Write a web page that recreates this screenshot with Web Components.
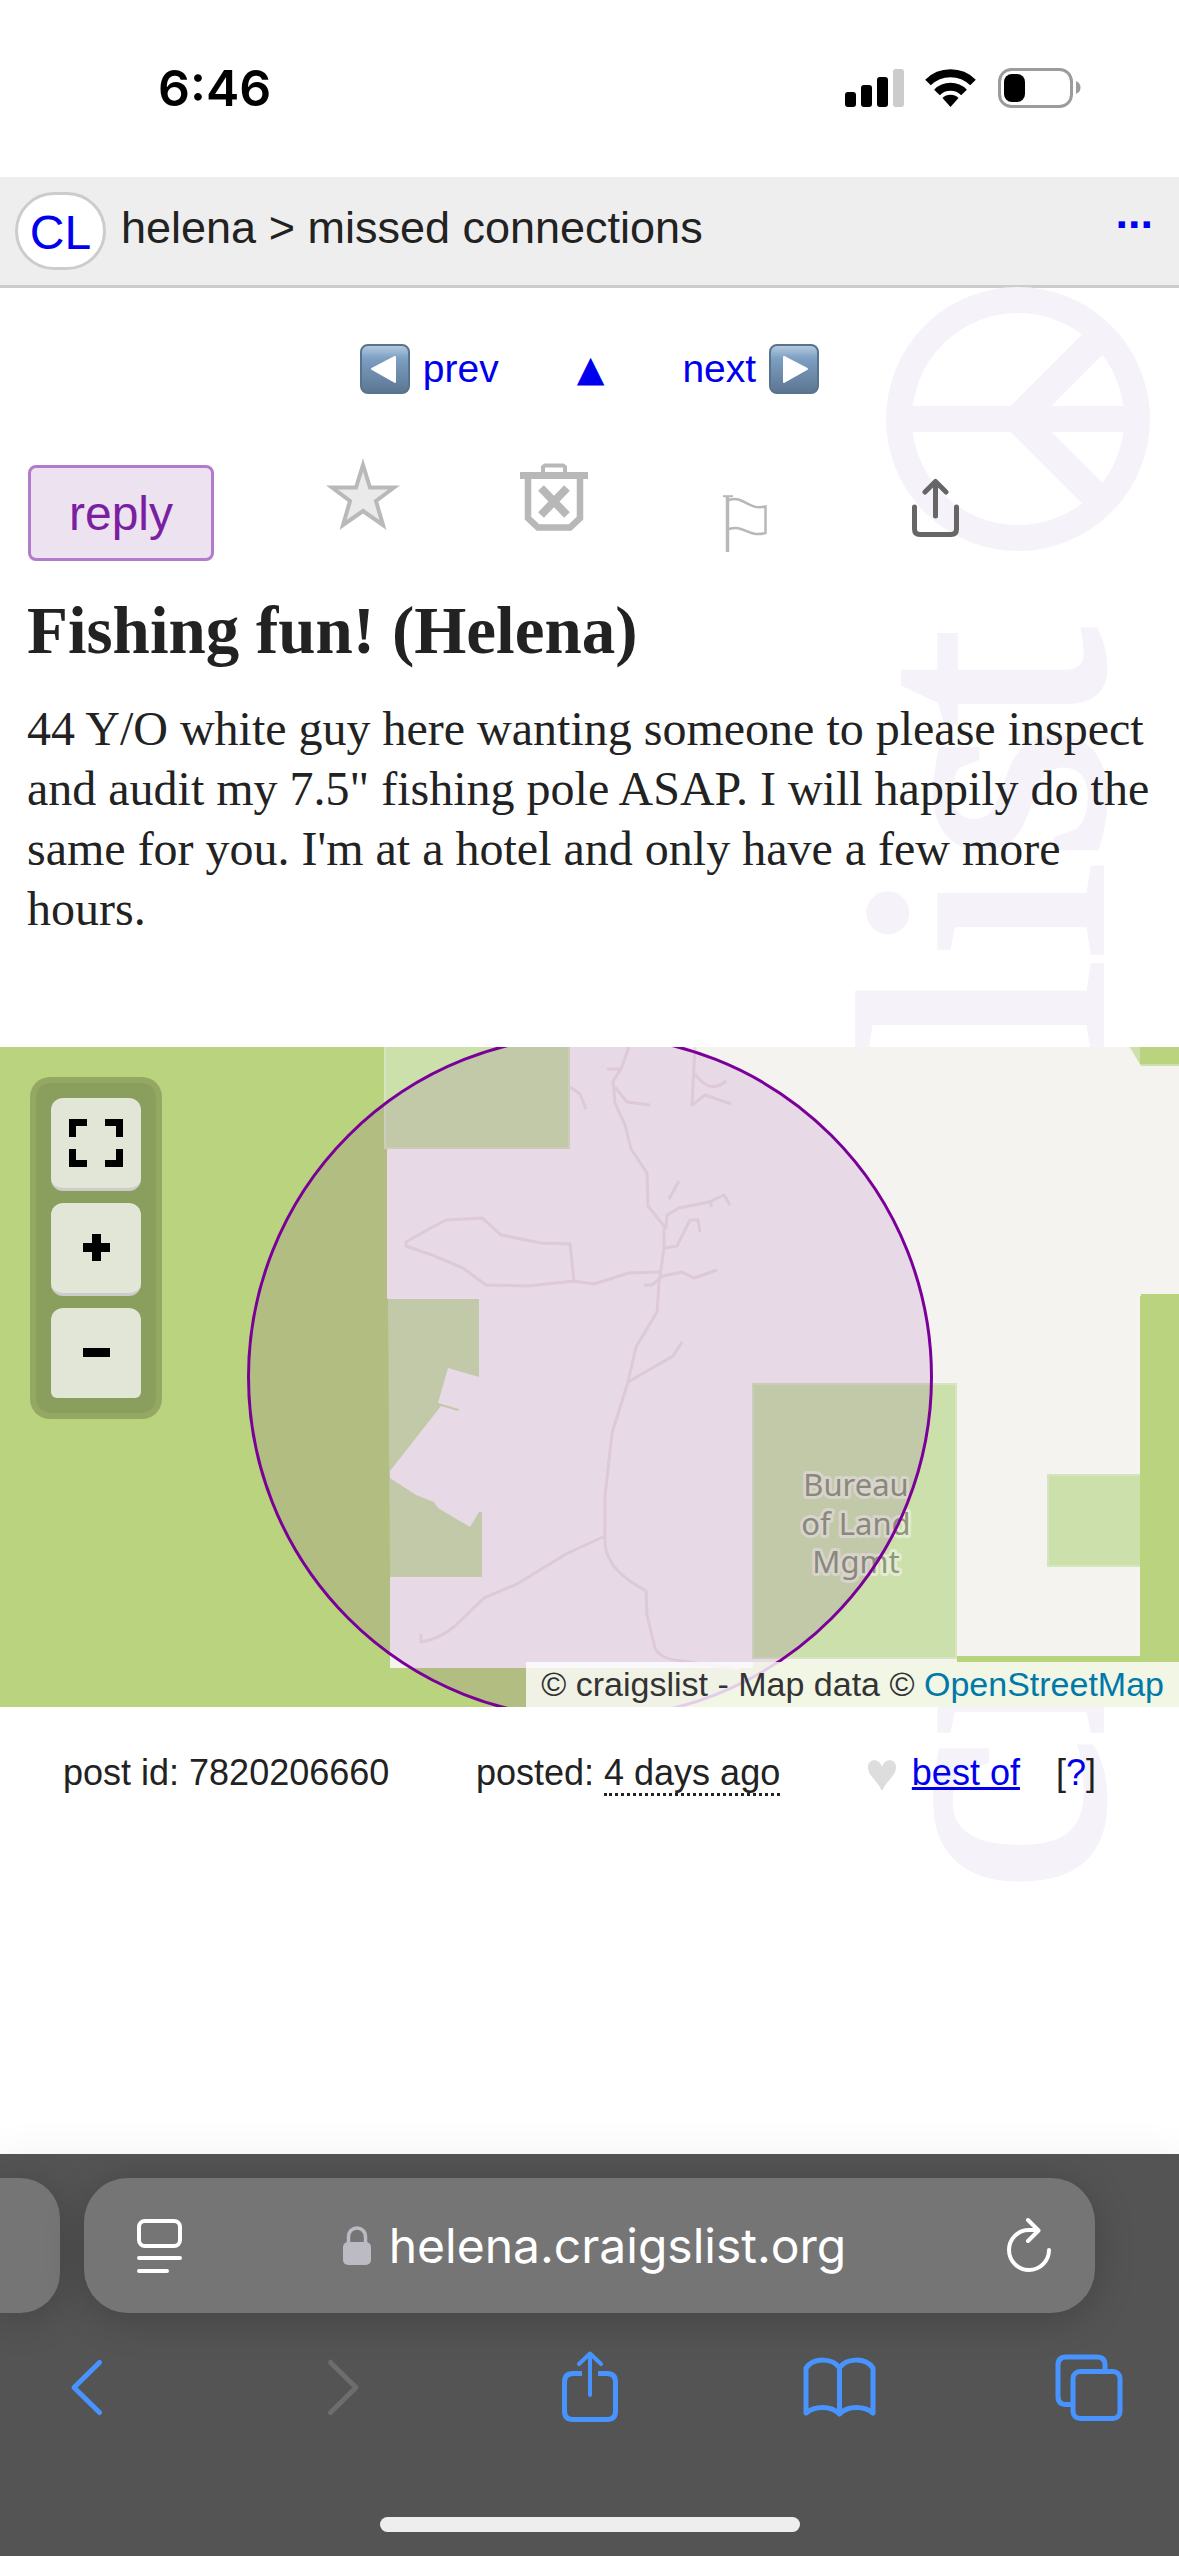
<!DOCTYPE html>
<html lang="en">
<head>
<meta charset="utf-8">
<meta name="viewport" content="width=device-width, initial-scale=1">
<title>Fishing fun! (Helena)</title>
<style>
  :root {
    --sans: "Liberation Sans", Arial, sans-serif;
    --serif: "Liberation Serif", "Times New Roman", serif;
    --system: Inter, sans-serif;
    --link: #0000ee;
    --ink: #222;
  }
  body {
    margin: 0;
    min-height: 100vh;
    display: flex;
    flex-direction: column;
    background: #fff;
    color: var(--ink);
    font-family: var(--sans);
  }
  main {
    position: relative;
    isolation: isolate;
    flex: 1;
  }
</style>
</head>
<body>
  <status-bar>6:46</status-bar>
  <site-header area="helena" category="missed connections"></site-header>
  <main>
    <page-watermark></page-watermark>
    <post-nav></post-nav>
    <post-actions></post-actions>
    <post-body>
      <span slot="title">Fishing fun! (Helena)</span>
      44 Y/O white guy here wanting someone to please inspect and audit my 7.5" fishing pole ASAP. I will happily do the same for you. I'm at a hotel and only have a few more hours.
    </post-body>
    <area-map><map-controls></map-controls></area-map>
    <post-meta post-id="7820206660" posted="4 days ago"></post-meta>
  </main>
  <safari-bar>helena.craigslist.org</safari-bar>

<script>
// small base class, every element below only supplies its markup
class BaseElement extends HTMLElement {
  constructor () {
    super()
    this._shadowRoot = this.attachShadow({ mode: 'open' })
  }

  connectedCallback () {
    this._shadowRoot.innerHTML = `
      <style>
        :host, * { box-sizing: border-box; }
        :host { display: block; }
        svg { display: block; flex: none; }
        a { color: var(--link); text-decoration: none; }
        button {
          display: block;
          margin: 0;
          padding: 0;
          border: 0;
          background: none;
          font: inherit;
          color: inherit;
          cursor: pointer;
        }
      </style>` + this.render()
  }
}

class StatusBar extends BaseElement {
  render () {
    return `
      <style>
        :host {
          display: flex;
          justify-content: space-between;
          align-items: center;
          height: 177px;
          padding: 0 98px 2px 158px;
          color: #000;
          font: 600 50px/60px var(--system);
        }
      </style>
      <time><slot></slot></time>
      <svg width="237" height="40" viewBox="845 68 237 40" role="img" aria-label="Signal, wifi, battery">
        <rect x="846" y="92" width="11" height="15" rx="3"/>
        <rect x="862" y="85" width="11" height="22" rx="3"/>
        <rect x="878" y="77" width="11" height="30" rx="3"/>
        <rect x="894" y="69" width="11" height="38" rx="3" fill="#ccc"/>
        <g fill="none" stroke="#000" stroke-width="8">
          <path d="M929 82.500a32 32 0 0 1 45 0"/>
          <path d="M938 92.500a19 19 0 0 1 27 0"/>
        </g>
        <path d="M943.500 98a11.500 11.500 0 0 1 16 0l-8 9z"/>
        <rect x="1000.500" y="69.500" width="72" height="37" rx="12" fill="none" stroke="#9c9c9c" stroke-width="3"/>
        <rect x="1005" y="74" width="21" height="28" rx="8"/>
        <path d="M1077 81q4.500 2 4.500 6.500t-4.500 6.500z" fill="#9c9c9c"/>
      </svg>`
  }
}
customElements.define('status-bar', StatusBar)

class SiteHeader extends BaseElement {
  render () {
    return `
      <style>
        :host {
          display: flex;
          align-items: center;
          height: 111px;
          padding: 0 26px 0 15px;
          background: #eee;
          border-bottom: 3px solid #ccc;
          font-size: 45px;
          line-height: 60px;
        }
        .logo {
          width: 91px;
          height: 78px;
          margin-right: 15px;
          border: 3px solid #ccc;
          border-radius: 39px;
          background: #fff;
          text-align: center;
          font-size: 48px;
          line-height: 76px;
        }
        nav {
          flex: 1;
          padding-bottom: 6px;
        }
        nav a { color: var(--ink); }
        button {
          padding-bottom: 36px;
          color: var(--link);
          font-weight: bold;
        }
      </style>
      <a class="logo" href="#">CL</a>
      <nav><a href="#">${this.getAttribute('area')}</a> &gt; <a href="#">${this.getAttribute('category')}</a></nav>
      <button>...</button>`
  }
}
customElements.define('site-header', SiteHeader)

class PageWatermark extends BaseElement {
  render () {
    return `
      <style>
        :host {
          position: absolute;
          top: 0;
          right: 0;
          z-index: -1;
          pointer-events: none;
        }
        svg { overflow: visible; }
        text { font-family: var(--serif); }
      </style>
      <svg width="339" height="1640" viewBox="0 0 339 1640" fill="#f5f3f9" stroke="#f5f3f9" aria-hidden="true">
        <circle cx="178" cy="131" r="119" fill="none" stroke-width="26"/>
        <path d="M59 131H297" stroke-width="26"/>
        <path d="M262 47L178 131L262 215" fill="none" stroke-width="29"/>
        <text transform="translate(261 1604) rotate(-90)" font-size="350" stroke-width="6">craigslist</text>
      </svg>`
  }
}
customElements.define('page-watermark', PageWatermark)

class PostNav extends BaseElement {
  arrow (points) {
    return `
      <svg width="50" height="50" viewBox="0 0 50 50" aria-hidden="true">
        <defs>
          <linearGradient id="g" x2="0" y2="1">
            <stop offset="0" stop-color="#b9cde0"/>
            <stop offset=".28" stop-color="#7c9fc2"/>
            <stop offset="1" stop-color="#5c7590"/>
          </linearGradient>
        </defs>
        <rect x="1" y="1" width="48" height="48" rx="7" fill="url(#g)" stroke="#58738e" stroke-width="2"/>
        <polygon points="${points}" fill="#fff" stroke="#fff" stroke-width="2" stroke-linejoin="round"/>
      </svg>`
  }

  render () {
    return `
      <style>
        nav {
          display: flex;
          justify-content: center;
          align-items: center;
          gap: 78px;
          padding-top: 56px;
          font-size: 39px;
          line-height: 50px;
        }
        a {
          display: flex;
          gap: 13px;
        }
        .up { font: 36px/50px "DejaVu Sans", sans-serif; }
      </style>
      <nav>
        <a href="#">${this.arrow('12,25 35,13 35,38')}prev</a>
        <a href="#" class="up">▲</a>
        <a href="#">next${this.arrow('38,25 15,13 15,38')}</a>
      </nav>`
  }
}
customElements.define('post-nav', PostNav)

class PostActions extends BaseElement {
  render () {
    return `
      <style>
        :host {
          display: flex;
          align-items: flex-end;
          padding: 63px 28px 0;
        }
        .reply {
          width: 186px;
          height: 96px;
          margin-right: 54px;
          border: 3px solid #b37bcb;
          border-radius: 8px;
          background: #ede2ef;
          color: #7b1fa2;
          font-size: 48px;
        }
        .icon {
          flex: 0 1 190px;
          display: flex;
          justify-content: center;
        }
      </style>
      <button class="reply">reply</button>
      <button class="icon" aria-label="favorite">
        <svg width="80" height="104" viewBox="323 457 80 104">
          <path d="M363 465L370 487.500H394L376 501L383 525L363 511L343 525L350 501L332 487.500H356Z" fill="#eaeaea" stroke="#b9b9bb" stroke-width="4"/>
        </svg>
      </button>
      <button class="icon" aria-label="hide">
        <svg width="80" height="104" viewBox="513 457 80 104" fill="none" stroke="#b8b8b8">
          <path d="M520 475.500H588" stroke-width="7"/>
          <path d="M543 474V467L545 465.500H563L565 467V474" stroke-width="4"/>
          <path d="M528 478V518L538 527.500H570L580 518V478" stroke-width="6.500"/>
          <path d="M541 488L567 515M567 488L541 515" stroke-width="8"/>
        </svg>
      </button>
      <button class="icon" aria-label="flag">
        <svg width="80" height="104" viewBox="703 457 80 104" fill="none" stroke="#b8b8b8">
          <path d="M727.500 496V552" stroke-width="3.500"/>
          <path d="M723 496.200H733" stroke-width="2"/>
          <path d="M729 500C744 495 748 511 765.500 506.500V533C748 538 744 524 729 529" stroke-width="2.500"/>
        </svg>
      </button>
      <button class="icon" aria-label="share">
        <svg width="80" height="104" viewBox="893 457 80 104" fill="none" stroke="#666" stroke-width="5" stroke-linecap="round" stroke-linejoin="round">
          <path d="M914.500 507V529Q914.500 534.500 920 534.500H951Q956.500 534.500 956.500 529V507"/>
          <path d="M935.500 516V482M925 492L935.500 481.500L946 492"/>
        </svg>
      </button>`
  }
}
customElements.define('post-actions', PostActions)

class PostBody extends BaseElement {
  render () {
    return `
      <style>
        :host {
          padding: 30px 27px 108px;
          font: 48px/60px var(--serif);
        }
        h1 {
          margin: 0 0 30px;
          font-size: 67px;
          line-height: 78px;
        }
        p { margin: 0; }
      </style>
      <h1><slot name="title"></slot></h1>
      <p><slot></slot></p>`
  }
}
customElements.define('post-body', PostBody)

class AreaMap extends BaseElement {
  render () {
    return `
      <style>
        :host {
          position: relative;
          height: 660px;
          overflow: hidden;
        }
        svg {
          width: 100%;
          height: 100%;
        }
        text {
          font: 31px "Noto Sans", sans-serif;
          text-anchor: middle;
          paint-order: stroke;
        }
        ::slotted(map-controls) {
          position: absolute;
          top: 30px;
          left: 30px;
        }
        .credit {
          position: absolute;
          right: 0;
          bottom: 0;
          padding: 0 15px;
          background: rgba(255, 255, 255, 0.8);
          color: #333;
          font-size: 34px;
          line-height: 45px;
        }
        .credit a { color: #0078a8; }
      </style>
      <svg viewBox="0 0 1179 660" preserveAspectRatio="xMidYMid slice" role="img" aria-label="Map">
        <rect width="1179" height="660" fill="#b9d37e"/>
        <path d="M387 0H1130L1141 18H1179V247H1141V609H957V615H753V621H390V252H387Z" fill="#f4f3ef"/>
        <path d="M1130 0H1179V19H1141Z" fill="#cbe0ab"/>
        <rect x="1140" y="0" width="39" height="17" fill="#b9d37e"/>
        <g fill="#cbe0ab" stroke="#d5e5bd" stroke-width="2">
          <rect x="385" y="-2" width="184" height="103"/>
          <path d="M388 252H479V330L448 321L438 356L459 362L458 364L441 359L390 424V431L416 448L434 455L438 461L470 480L479 465H482V530H390Z" stroke="none"/>
          <rect x="753" y="337" width="203" height="274"/>
          <rect x="1048" y="428" width="93" height="91"/>
        </g>
        <rect x="1140" y="249" width="39" height="411" fill="#b9d37e"/>
        <g fill="none" stroke="#e9e0de" stroke-width="3" stroke-linejoin="round">
          <path d="M574 234L570 197L541 196L501 188L490 178L482 171L446 173L427 183L406 195V199L432 208L463 221L486 238L528 239L574 234L594 237L629 226L659 225"/>
          <path d="M644 238H652L663 229L682 225L694 231L717 223"/>
          <path d="M629 0L621 22L613 34L615 56L625 78L631 102L647 126L648 159L664 179V201L659 236L657 265L636 300L628 335L612 386L605 449V498C608 520 625 532 646 544L647 568L655 601Q660 612 682 614L740 622"/>
          <path d="M421 587V595Q440 592 455 579L484 551L517 537L566 507L605 489"/>
          <path d="M628 335L673 309L682 295"/>
          <path d="M666 182L667 168L679 161L709 155L724 148L730 158M711 160V155M669 152L679 134"/>
          <path d="M665 201L677 199L690 173H698L700 185"/>
          <path d="M607 22H621M615 40L627 55L650 58M695 0L692 58L705 48L731 57M695 27Q710 48 726 34M570 40L580 47L586 62"/>
        </g>
        <g fill="#8d9878" stroke="#e3ecd2" stroke-width="6" stroke-linejoin="round">
          <text x="856" y="449">Bureau</text>
          <text x="856" y="488">of Land</text>
          <text x="856" y="526">Mgmt</text>
        </g>
        <circle cx="590" cy="330" r="341.500" fill="#7a00a0" fill-opacity=".1" stroke="#7a0099" stroke-width="3"/>
      </svg>
      <slot></slot>
      <div class="credit">© craigslist - Map data © <a href="#">OpenStreetMap</a></div>`
  }
}
customElements.define('area-map', AreaMap)

class MapControls extends BaseElement {
  render () {
    return `
      <style>
        :host {
          display: flex;
          flex-direction: column;
          gap: 12px;
          padding: 15px;
          border: 6px solid rgba(0, 0, 0, 0.2);
          border-radius: 20px;
          background: rgba(0, 0, 0, 0.25);
          background-clip: padding-box;
        }
        button {
          width: 90px;
          height: 93px;
          border-bottom: 3px solid #ccc;
          border-radius: 12px;
          background: #e2e6d6;
        }
        button:first-child { border-radius: 6px 6px 12px 12px; }
        button:last-child {
          height: 90px;
          border-bottom: 0;
          border-radius: 12px 12px 6px 6px;
        }
      </style>
      <button aria-label="Full screen">
        <svg width="90" height="90" viewBox="0 0 90 90" fill="none" stroke="#000" stroke-width="7">
          <path d="M21.500 39V24.500H36M54 24.500H68.500V39M68.500 51V65.500H54M36 65.500H21.500V51"/>
        </svg>
      </button>
      <button aria-label="Zoom in">
        <svg width="90" height="90" viewBox="0 0 90 90" stroke="#000" stroke-width="9">
          <path d="M32 44.500H59M45.500 31V58"/>
        </svg>
      </button>
      <button aria-label="Zoom out">
        <svg width="90" height="90" viewBox="0 0 90 90" stroke="#000" stroke-width="9">
          <path d="M32 44.500H59"/>
        </svg>
      </button>`
  }
}
customElements.define('map-controls', MapControls)

class PostMeta extends BaseElement {
  render () {
    return `
      <style>
        :host {
          display: flex;
          justify-content: space-between;
          align-items: center;
          padding: 44px 83px 0 63px;
          font-size: 36px;
          line-height: 44px;
        }
        time { border-bottom: 3px dotted #222; }
        .best {
          display: flex;
          align-items: center;
        }
        .best svg { margin-right: 15px; }
        .best > a {
          margin-right: 36px;
          text-decoration: underline;
          text-decoration-thickness: 3px;
        }
      </style>
      <span>post id: ${this.getAttribute('post-id')}</span>
      <span>posted: <time>${this.getAttribute('posted')}</time></span>
      <span class="best">
        <svg width="30" height="34" viewBox="0 -3 30 34" aria-hidden="true">
          <path d="M15 33C12 22 1 18 1 8C1 -1 13 -1 15 8C17 -1 29 -1 29 8C29 18 18 22 15 33Z" fill="#ddd"/>
        </svg>
        <a href="#">best of</a>
        <span>[<a href="#">?</a>]</span>
      </span>`
  }
}
customElements.define('post-meta', PostMeta)

class SafariBar extends BaseElement {
  render () {
    return `
      <style>
        :host {
          padding: 24px 0;
          overflow: hidden;
          background: #545454;
          box-shadow: 0 0 40px rgba(0, 0, 0, 0.06);
          color: #fff;
        }
        .tabs {
          display: flex;
          gap: 24px;
          padding-right: 84px;
        }
        .previous, .address {
          height: 135px;
          background: #757575;
          box-shadow: 0 6px 40px rgba(0, 0, 0, 0.2);
        }
        .previous {
          width: 60px;
          border-radius: 0 40px 40px 0;
        }
        .address {
          flex: 1;
          display: flex;
          align-items: center;
          justify-content: space-between;
          padding: 0 38px 0 48px;
          border-radius: 44px;
          font: 48px/60px var(--system);
        }
        .host {
          display: flex;
          align-items: center;
          gap: 18px;
        }
        .toolbar {
          display: flex;
          justify-content: space-between;
          padding: 34px 48px 0;
        }
        .toolbar svg, .address button svg {
          fill: none;
          stroke-linecap: round;
          stroke-linejoin: round;
        }
        .toolbar svg {
          stroke: #4794ff;
          stroke-width: 5;
        }
        .toolbar .off { stroke: #6d6d6d; }
        .home {
          width: 420px;
          height: 15px;
          margin: 90px auto 0;
          border-radius: 8px;
          background: #eee;
        }
      </style>
      <div class="tabs">
        <div class="previous"></div>
        <div class="address">
          <button aria-label="Page settings">
            <svg width="56" height="60" viewBox="132 2216 56 60" stroke="#fff" stroke-width="4">
              <rect x="139" y="2221" width="41" height="25" rx="6"/>
              <path d="M139 2258H180M139 2271H167"/>
            </svg>
          </button>
          <span class="host">
            <svg width="28" height="40" viewBox="0 0 28 40" aria-hidden="true">
              <path d="M5.500 18V11C5.500 -1 22.500 -1 22.500 11V18" fill="none" stroke="#bcbac2" stroke-width="3.500"/>
              <rect x="0" y="16" width="28" height="23" rx="5" fill="#bcbac2"/>
            </svg>
            <slot></slot>
          </span>
          <button aria-label="Reload">
            <svg width="56" height="60" viewBox="1001 2214 56 60" stroke="#fff" stroke-width="4">
              <path d="M1049 2248A20 20 0 1 1 1029 2228H1038M1028 2218L1038.500 2228.500L1028 2239"/>
            </svg>
          </button>
        </div>
      </div>
      <div class="toolbar">
        <button aria-label="Back">
          <svg width="80" height="80" viewBox="48 2347 80 80"><path d="M99.500 2362.500L74 2387.500L99.500 2412.500"/></svg>
        </button>
        <button aria-label="Forward">
          <svg class="off" width="80" height="80" viewBox="299 2347 80 80"><path d="M330.500 2362.500L356 2387.500L330.500 2412.500"/></svg>
        </button>
        <button aria-label="Share">
          <svg width="80" height="80" viewBox="549 2347 80 80">
            <path d="M581 2373.500H572Q563.500 2373.500 563.500 2382V2411Q563.500 2419.500 572 2419.500H606Q614.500 2419.500 614.500 2411V2382Q614.500 2373.500 606 2373.500H597" stroke-linecap="butt"/>
            <path d="M589 2395V2354M578 2364L589 2353.500L600 2364" stroke-width="4"/>
          </svg>
        </button>
        <button aria-label="Bookmarks">
          <svg width="80" height="80" viewBox="800 2347 80 80" stroke-width="4">
            <path d="M839.500 2414V2368C833 2358 814 2357 806 2368V2413C814 2406 831 2405 839.500 2414C848 2405 865 2406 873 2413V2368C865 2357 846 2358 839.500 2368"/>
          </svg>
        </button>
        <button aria-label="Tabs">
          <svg width="80" height="80" viewBox="1051 2347 80 80">
            <path d="M1105 2369V2365Q1105 2357 1097 2357H1066Q1058 2357 1058 2365V2396Q1058 2404.500 1066 2404.500H1071" stroke-linecap="butt"/>
            <rect x="1073" y="2371.500" width="47" height="47" rx="7"/>
          </svg>
        </button>
      </div>
      <div class="home"></div>`
  }
}
customElements.define('safari-bar', SafariBar)
</script>
</body>
</html>
